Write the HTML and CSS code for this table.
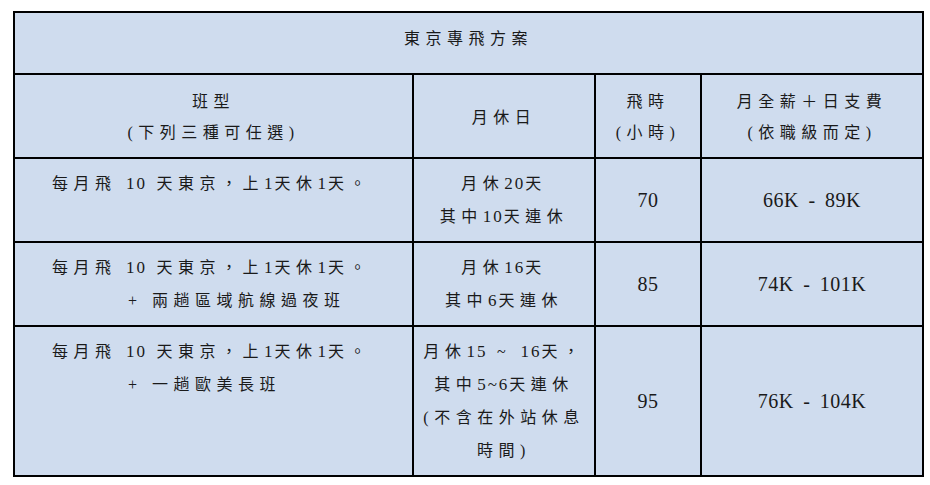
FILE: index.html
```html
<!DOCTYPE html>
<html lang="zh-Hant">
<head>
<meta charset="utf-8">
<title>東京專飛方案</title>
<link rel="stylesheet" href="styles.css">
</head>
<body>
<table class="plan">
  <colgroup>
    <col class="c-type">
    <col class="c-off">
    <col class="c-hours">
    <col class="c-pay">
  </colgroup>
  <tr class="title-row">
    <td colspan="4" class="title">東京專飛方案</td>
  </tr>
  <tr class="head-row">
    <td>班型<br>(下列三種可任選)</td>
    <td>月休日</td>
    <td>飛時<br>(小時)</td>
    <td>月全薪＋日支費<br>(依職級而定)</td>
  </tr>
  <tr>
    <td class="type"><span class="l1">每月飛 <span class="d">10</span> 天東京，上<span class="d">1</span>天休<span class="d">1</span>天。</span></td>
    <td class="off">月休<span class="d">20</span>天<br>其中<span class="d">10</span>天連休</td>
    <td class="num">70</td>
    <td class="num">66K - 89K</td>
  </tr>
  <tr>
    <td class="type"><span class="l1">每月飛 <span class="d">10</span> 天東京，上<span class="d">1</span>天休<span class="d">1</span>天。</span><span class="l2">+ 兩趟區域航線過夜班</span></td>
    <td class="off">月休<span class="d">16</span>天<br>其中<span class="d">6</span>天連休</td>
    <td class="num">85</td>
    <td class="num">74K - 101K</td>
  </tr>
  <tr>
    <td class="type"><span class="l1">每月飛 <span class="d">10</span> 天東京，上<span class="d">1</span>天休<span class="d">1</span>天。</span><span class="l2">+ 一趟歐美長班</span></td>
    <td class="off">月休<span class="d">15</span> ~ <span class="d">16</span>天，<br>其中<span class="d">5~6</span>天連休<br>(不含在外站休息<br>時間)</td>
    <td class="num">95</td>
    <td class="num">76K - 104K</td>
  </tr>
</table>
<p class="note">上述薪資為預估範圍，實際以公司核定為準，並依個人職級調整。</p>
</body>
</html>
```

FILE: styles.css
```css
html, body {
  margin: 0;
  padding: 0;
  background: #ffffff;
  overflow: hidden;
}

body {
  font-family: "Liberation Serif", "Noto Sans CJK TC", serif;
  font-size: 16px;
  color: #1a1a1a;
  padding: 11px 0 0 13px;
}

.plan {
  border-collapse: collapse;
  table-layout: fixed;
  width: 909px;
  background: #cfdcee;
}

.c-type { width: 399px; }
.c-off { width: 182px; }
.c-hours { width: 106px; }
.c-pay { width: 222px; }

.plan td {
  border: 2px solid #000;
  padding: 8px 2px;
  line-height: 33px;
  letter-spacing: 5.5px;
  text-align: center;
  vertical-align: top;
}

.plan .title {
  padding: 9px 2px 18px;
  vertical-align: middle;
}

.head-row td {
  padding: 11px 2px 9px;
  line-height: 31px;
  vertical-align: middle;
}

.plan .type {
  text-align: left;
  padding-left: 37px;
}

.type .l1, .type .l2 {
  display: block;
}

.type .l2 {
  padding-left: 76px;
}

.d {
  font-size: 17px;
  letter-spacing: 2px;
}

.plan .num {
  vertical-align: middle;
  font-size: 20px;
  letter-spacing: 0.5px;
  word-spacing: 4px;
}

.note {
  margin: 4px 0 0 27px;
  line-height: 33px;
  letter-spacing: 5.5px;
}
```
